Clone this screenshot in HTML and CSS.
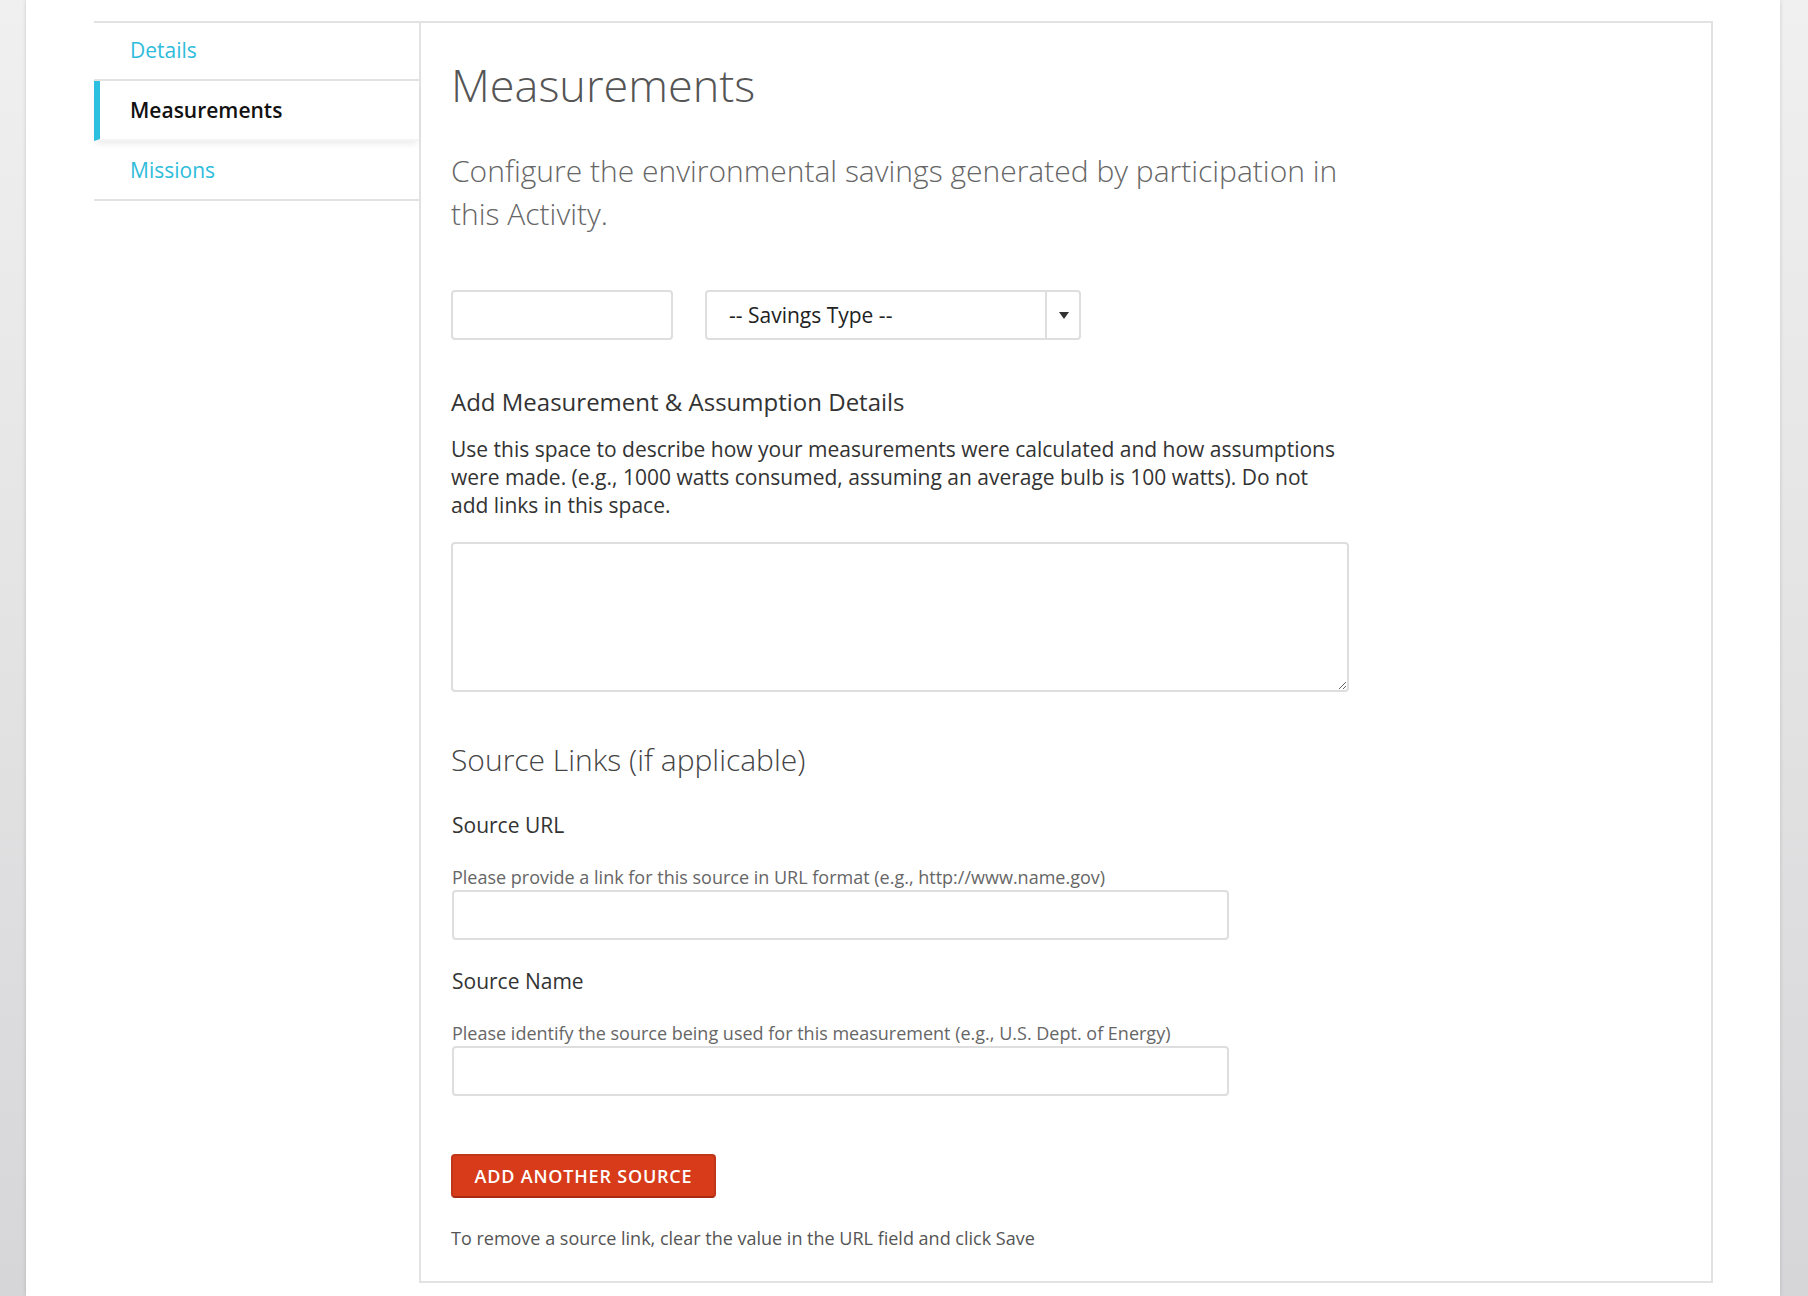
FILE: index.html
```html
<!DOCTYPE html>
<html>
<head>
	<title>Measurements</title>
	<meta charset="utf-8">
	<link rel="stylesheet" href="styles.css">
</head>
<body>
<div class="page">
	<div class="layout">
		<ul class="side-nav">
			<li><a href="#">Details</a></li>
			<li class="active"><a href="#">Measurements</a></li>
			<li><a href="#">Missions</a></li>
		</ul>

		<div class="panel">
			<h1>Measurements</h1>
			<p class="intro">Configure the environmental savings generated by participation in this Activity.</p>

			<div class="savings-row">
				<input type="text" class="field amount">
				<div class="select-wrap">
					<span class="select-text">-- Savings Type --</span>
					<span class="select-arrow"></span>
				</div>
			</div>

			<h3>Add Measurement &amp; Assumption Details</h3>
			<p class="desc">Use this space to describe how your measurements were calculated and how assumptions were made. (e.g., 1000 watts consumed, assuming an average bulb is 100 watts). Do not add links in this space.</p>
			<textarea class="field notes"></textarea>

			<h2>Source Links (if applicable)</h2>

			<label class="label">Source URL</label>
			<div class="help">Please provide a link for this source in URL format (e.g., http://www.name.gov)</div>
			<input type="text" class="field source">

			<label class="label">Source Name</label>
			<div class="help">Please identify the source being used for this measurement (e.g., U.S. Dept. of Energy)</div>
			<input type="text" class="field source">

			<button class="btn-add">ADD ANOTHER SOURCE</button>

			<p class="note">To remove a source link, clear the value in the URL field and click Save</p>
		</div>
	</div>
</div>
</body>
</html>
```

FILE: styles.css
```css
html, body{
	margin: 0;
	padding: 0;
}
body{
	background: linear-gradient(#f0f0f0, #d6d6d8);
	font-family: "Open Sans", "Liberation Sans", sans-serif;
	color: #333;
	height: 1296px;
	overflow: hidden;
}
.page{
	margin: 0 28px 0 26px;
	height: 1296px;
	background-color: #fff;
	box-shadow: 0 0 4px rgba(0,0,0,.15);
	padding: 21px 0 0 68px;
	box-sizing: border-box;
}
.layout{
	display: flex;
	align-items: flex-start;
	width: 1619px;
}

/* left menu */
.side-nav{
	width: 325px;
	flex: none;
	margin: 0;
	padding: 0;
	list-style: none;
	border-top: 2px solid #e2e2e2;
}
.side-nav li{
	height: 58px;
	line-height: 58px;
	padding-left: 36px;
	border-bottom: 2px solid #e2e2e2;
	font-size: 21px;
}
.side-nav li:first-child{
	height: 56px;
	line-height: 54px;
}
.side-nav li a{
	color: #2fbcdc;
	text-decoration: none;
}
.side-nav li.active{
	position: relative;
	border-left: 6px solid #2cbfe0;
	padding-left: 30px;
	border-bottom-color: #f4f4f4;
	box-shadow: 0 5px 6px -2px rgba(0,0,0,.08);
}
.side-nav li.active a{
	color: #111;
	font-weight: 600;
}

/* right panel */
.panel{
	flex: 1;
	border: 2px solid #e2e2e2;
	padding: 36px 30px 31px;
	min-width: 0;
}
h1{
	margin: 0;
	font: 300 45px/52px "Open Sans", sans-serif;
	color: #555;
}
.intro{
	margin: 38px 0 0;
	width: 900px;
	font: 300 30px/43px "Open Sans", sans-serif;
	color: #666;
}
.savings-row{
	display: flex;
	gap: 32px;
	margin-top: 55px;
}
.field{
	display: block;
	box-sizing: border-box;
	border: 2px solid #dedede;
	border-radius: 4px;
	background: #fff;
	font-family: "Open Sans", sans-serif;
	font-size: 18px;
	margin: 0;
}
.amount{
	width: 222px;
	height: 50px;
}
.select-wrap{
	display: flex;
	width: 376px;
	height: 50px;
	box-sizing: border-box;
	border: 2px solid #dedede;
	border-radius: 4px;
}
.select-text{
	flex: 1;
	padding-left: 22px;
	line-height: 46px;
	font-size: 21px;
	color: #222;
}
.select-arrow{
	width: 32px;
	border-left: 2px solid #dedede;
	position: relative;
}
.select-arrow:after{
	content: "";
	position: absolute;
	left: 12px;
	top: 20px;
	border-left: 5px solid transparent;
	border-right: 5px solid transparent;
	border-top: 7px solid #333;
}
h3{
	margin: 47px 0 0;
	font: 400 24px/30px "Open Sans", sans-serif;
	color: #333;
}
.desc{
	margin: 18px 0 0;
	width: 890px;
	font-size: 21px;
	line-height: 28px;
	color: #333;
}
.notes{
	width: 898px;
	height: 150px;
	margin-top: 23px;
	resize: vertical;
}
h2{
	margin: 48px 0 0;
	font: 300 30px/40px "Open Sans", sans-serif;
	color: #444;
}
.label{
	display: block;
	margin-top: 31px;
	padding-left: 1px;
	font-size: 21px;
	line-height: 28px;
	color: #333;
}
.help{
	margin-top: 26px;
	padding-left: 1px;
	font-size: 18px;
	line-height: 24px;
	color: #666;
}
.source{
	width: 777px;
	height: 50px;
	margin: 1px 0 0 1px;
}
.source + .label{
	margin-top: 27px;
}
.btn-add{
	display: block;
	margin-top: 58px;
	width: 265px;
	height: 44px;
	background-color: #d73b1a;
	border: 2px solid #c0361a;
	border-bottom-color: #a82a10;
	border-radius: 4px;
	color: #fff;
	font: 600 18px "Open Sans", sans-serif;
	letter-spacing: 0.8px;
	padding: 0;
	cursor: pointer;
}
.note{
	margin: 28px 0 0;
	font-size: 18px;
	line-height: 24px;
	color: #555;
}
```
